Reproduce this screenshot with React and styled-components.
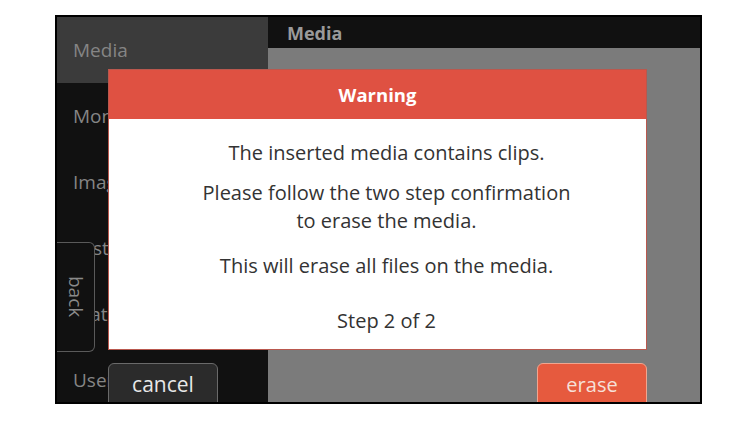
import styled, { createGlobalStyle } from "styled-components";

const GlobalStyle = createGlobalStyle`
  body {
    margin: 0;
    background: #fff;
    font-family: "Open Sans", "Noto Sans", sans-serif;
  }
`;

const Page = styled.div`
  padding: 15px 0 0 55px;
`;

const Screen = styled.div`
  position: relative;
  width: 647px;
  height: 389px;
  box-sizing: border-box;
  border: 2px solid #000;
  display: grid;
  grid-template-columns: 211px 1fr;
  overflow: hidden;
`;

const Sidebar = styled.nav`
  background: #111;
  display: flex;
  flex-direction: column;
`;

const NavItem = styled.div`
  height: 66px;
  flex: none;
  display: flex;
  align-items: center;
  padding-left: 16px;
  font-size: 19px;
  color: #858585;
  background: ${(p) => (p.$active ? "#3b3b3b" : "transparent")};
`;

const Main = styled.section`
  display: flex;
  flex-direction: column;
  background: #7b7b7b;
`;

const Header = styled.header`
  height: 31px;
  background: #111;
  display: flex;
  align-items: center;
  padding-left: 19px;
  font-size: 18px;
  font-weight: 700;
  color: #9a9a9a;
`;

const BackTab = styled.div`
  position: absolute;
  left: 0;
  top: 225px;
  width: 38px;
  height: 110px;
  box-sizing: border-box;
  border: 1px solid #5a5a5a;
  border-left: none;
  border-radius: 0 6px 6px 0;
  background: #111;
  display: flex;
  align-items: center;
  justify-content: center;
  writing-mode: vertical-rl;
  font-size: 19px;
  color: #8a8a8a;
`;

const Dialog = styled.div`
  position: absolute;
  left: 51px;
  top: 52px;
  width: 539px;
  height: 281px;
  box-sizing: border-box;
  background: #fff;
  border: 1px solid #b9584e;
  display: flex;
  flex-direction: column;
`;

const DialogTitle = styled.div`
  height: 49px;
  flex: none;
  background: #df5142;
  color: #fff;
  font-size: 18.5px;
  font-weight: 700;
  display: flex;
  align-items: center;
  justify-content: center;
`;

const DialogBody = styled.div`
  display: flex;
  flex-direction: column;
  align-items: center;
  padding: 20px 0 0 18px;
  color: #333;
  font-size: 20px;
  text-align: center;
`;

const Para = styled.p`
  margin: 0 0 ${(p) => p.$gap || 17}px;
  line-height: 28px;
`;

const Actions = styled.div`
  position: absolute;
  left: 51px;
  right: 53px;
  top: 346px;
  display: flex;
  justify-content: space-between;
`;

const Button = styled.button`
  width: 110px;
  height: 50px;
  box-sizing: border-box;
  border-radius: 6px;
  font-family: inherit;
  font-size: ${(p) => (p.$danger ? 20 : 21)}px;
  padding: 0 0 8px;
  border: 1px solid ${(p) => (p.$danger ? "#f0a58f" : "#6a6a6a")};
  background: ${(p) => (p.$danger ? "#e65a3e" : "#2b2b2b")};
  color: ${(p) => (p.$danger ? "#f6e0d8" : "#e8e8e8")};
`;

const navItems = ["Media", "Monitoring", "Image", "System", "Status", "User"];

export default function App() {
  return (
    <Page>
      <GlobalStyle />
      <Screen>
        <Sidebar>
          {navItems.map((item, i) => (
            <NavItem key={item} $active={i === 0}>
              {item}
            </NavItem>
          ))}
        </Sidebar>
        <Main>
          <Header>Media</Header>
        </Main>
        <BackTab>back</BackTab>
        <Dialog>
          <DialogTitle>Warning</DialogTitle>
          <DialogBody>
            <Para $gap={12}>The inserted media contains clips.</Para>
            <Para>
              Please follow the two step confirmation
              <br />
              to erase the media.
            </Para>
            <Para $gap={27}>This will erase all files on the media.</Para>
            <Para>Step 2 of 2</Para>
          </DialogBody>
        </Dialog>
        <Actions>
          <Button>cancel</Button>
          <Button $danger>erase</Button>
        </Actions>
      </Screen>
    </Page>
  );
}
